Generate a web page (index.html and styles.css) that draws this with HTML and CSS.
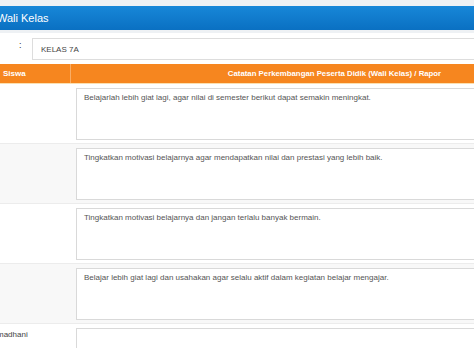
FILE: index.html
```html
<!DOCTYPE html>
<html>
<head>
<meta charset="utf-8">
<link rel="stylesheet" href="styles.css">
</head>
<body>
<div class="topstrip"></div>
<div class="titlebar"><span class="title">Wali Kelas</span></div>
<div class="sep"></div>
<div class="formrow">
  <div class="colon">:</div>
  <div class="input">KELAS 7A</div>
</div>
<div class="table">
  <div class="thead">
    <div class="th th-name">Siswa</div>
    <div class="th th-note">Catatan Perkembangan Peserta Didik (Wali Kelas) / Rapor</div>
  </div>
  <div class="row">
    <div class="name"></div>
    <div class="cell"><div class="ta">Belajarlah lebih giat lagi, agar nilai di semester berikut dapat semakin meningkat.</div></div>
  </div>
  <div class="row alt">
    <div class="name"></div>
    <div class="cell"><div class="ta">Tingkatkan motivasi belajarnya agar mendapatkan nilai dan prestasi yang lebih baik.</div></div>
  </div>
  <div class="row">
    <div class="name"></div>
    <div class="cell"><div class="ta">Tingkatkan motivasi belajarnya dan jangan terlalu banyak bermain.</div></div>
  </div>
  <div class="row alt">
    <div class="name"></div>
    <div class="cell"><div class="ta">Belajar lebih giat lagi dan usahakan agar selalu aktif dalam kegiatan belajar mengajar.</div></div>
  </div>
  <div class="row">
    <div class="name"><span class="nm">madhani</span></div>
    <div class="cell"><div class="ta"></div></div>
  </div>
</div>
</body>
</html>
```
FILE: styles.css
```css
html, body {
  margin: 0;
  padding: 0;
  background: #ffffff;
  font-family: "Liberation Sans", Arial, sans-serif;
  overflow: hidden;
}
.topstrip {
  height: 6px;
  background: #eef1f4;
}
.titlebar {
  height: 24px;
  background: linear-gradient(#1787d8, #0a70c2);
  display: flex;
  align-items: center;
  color: #ffffff;
  font-size: 11px;
}
.title {
  margin-left: -3px;
}
.sep {
  height: 3px;
  background: #eef1f4;
  margin-bottom: 5px;
}
.formrow {
  display: flex;
  align-items: center;
  height: 22px;
  margin-bottom: 4px;
}
.colon {
  width: 32px;
  box-sizing: border-box;
  padding-left: 19px;
  font-size: 9px;
  color: #333;
  margin-top: -8px;
}
.input {
  flex: 1;
  height: 22px;
  box-sizing: border-box;
  border: 1px solid #dddddd;
  border-right: none;
  padding-left: 8px;
  display: flex;
  align-items: center;
  font-size: 8px;
  color: #444;
}
.thead {
  display: grid;
  grid-template-columns: 71px 1fr;
  height: 19px;
  background: #f6861f;
  border-bottom: 1px solid #fbe0b0;
}
.th {
  color: #ffffff;
  font-weight: bold;
  font-size: 7.8px;
  display: flex;
  align-items: center;
}
.th-name {
  padding-left: 3px;
  font-size: 8px;
  border-right: 1px solid #f9ad66;
}
.th-note {
  justify-content: center;
  padding-left: 124px;
}
.row {
  display: grid;
  grid-template-columns: 71px 1fr;
  height: 60px;
  box-sizing: border-box;
  border-bottom: 1px solid #ececec;
}
.row.alt {
  background: #f8f8f8;
}
.name {
  font-size: 8px;
  color: #444;
  padding-top: 6px;
}
.nm {
  display: block;
  margin-left: -3px;
}
.cell {
  padding: 4px 0 0 5px;
}
.ta {
  height: 52px;
  box-sizing: border-box;
  background: #ffffff;
  border: 1px solid #d9d9d9;
  border-right: none;
  padding: 4px 0 0 7px;
  font-size: 8px;
  color: #555;
}
```
